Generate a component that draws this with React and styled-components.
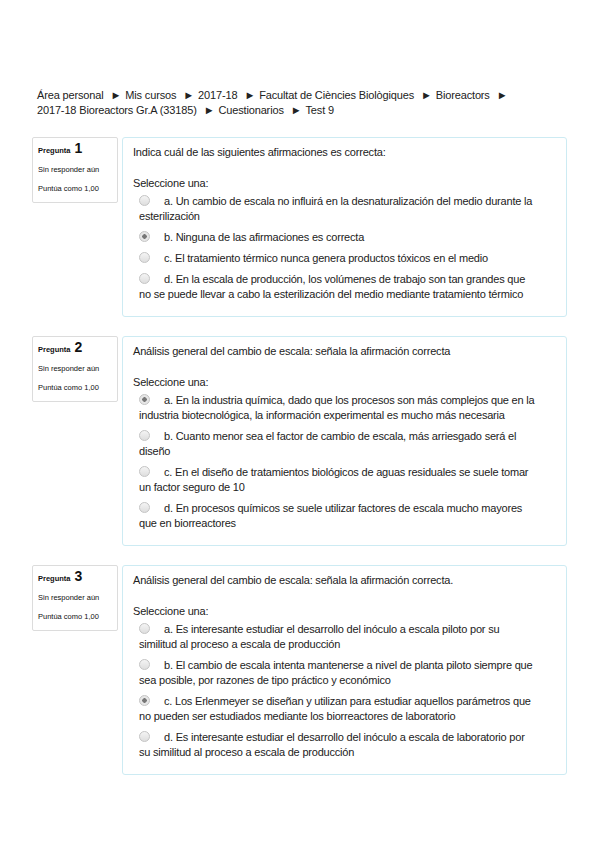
import styled, { createGlobalStyle } from "styled-components";

const GlobalStyle = createGlobalStyle`
  body {
    margin: 0;
    background: #fff;
    font-family: "Liberation Sans", Arial, sans-serif;
    color: #222;
  }
`;

const questions = [
  {
    num: 1,
    text: "Indica cuál de las siguientes afirmaciones es correcta:",
    selected: 1,
    options: [
      "a. Un cambio de escala no influirá en la desnaturalización del medio durante la esterilización",
      "b. Ninguna de las afirmaciones es correcta",
      "c. El tratamiento térmico nunca genera productos tóxicos en el medio",
      "d. En la escala de producción, los volúmenes de trabajo son tan grandes que no se puede llevar a cabo la esterilización del medio mediante tratamiento térmico",
    ],
  },
  {
    num: 2,
    text: "Análisis general del cambio de escala: señala la afirmación correcta",
    selected: 0,
    options: [
      "a. En la industria química, dado que los procesos son más complejos que en la industria biotecnológica, la información experimental es mucho más necesaria",
      "b. Cuanto menor sea el factor de cambio de escala, más arriesgado será el diseño",
      "c. En el diseño de tratamientos biológicos de aguas residuales se suele tomar un factor seguro de 10",
      "d. En procesos químicos se suele utilizar factores de escala mucho mayores que en biorreactores",
    ],
  },
  {
    num: 3,
    text: "Análisis general del cambio de escala: señala la afirmación correcta.",
    selected: 2,
    options: [
      "a. Es interesante estudiar el desarrollo del inóculo a escala piloto por su similitud al proceso a escala de producción",
      "b. El cambio de escala intenta mantenerse a nivel de planta piloto siempre que sea posible, por razones de tipo práctico y económico",
      "c. Los Erlenmeyer se diseñan y utilizan para estudiar aquellos parámetros que no pueden ser estudiados mediante los biorreactores de laboratorio",
      "d. Es interesante estudiar el desarrollo del inóculo a escala de laboratorio por su similitud al proceso a escala de producción",
    ],
  },
];

const crumbs = [
  "Área personal",
  "Mis cursos",
  "2017-18",
  "Facultat de Ciències Biològiques",
  "Bioreactors",
  "2017-18 Bioreactors Gr.A (33185)",
  "Cuestionarios",
  "Test 9",
];

const Page = styled.div`
  padding: 88px 32px 40px 32px;
  width: 535px;
`;

const Breadcrumb = styled.div`
  font-size: 11px;
  line-height: 15px;
  letter-spacing: -0.15px;
  padding-left: 5px;
  margin-bottom: 19px;
  color: #222;
`;

const Arrow = styled.span`
  font-size: 11px;
  margin: 0 4px 0 7px;
`;

const Question = styled.div`
  display: flex;
  align-items: flex-start;
  gap: 4px;
  margin-bottom: 19px;
`;

const Info = styled.div`
  width: 74px;
  flex: none;
  border: 1px solid #dcdcdc;
  border-radius: 2px;
  padding: 3px 5px 8px 5px;
  font-size: 7.5px;
  color: #111;
`;

const InfoTitle = styled.div`
  font-size: 7.5px;
  font-weight: bold;
  line-height: 14px;
  margin-bottom: 7px;
`;

const Num = styled.span`
  font-size: 14px;
  margin-left: 2px;
`;

const InfoLine = styled.div`
  line-height: 10px;
  margin-bottom: 9px;
  &:last-child {
    margin-bottom: 0;
  }
`;

const Content = styled.div`
  flex: 1;
  border: 1px solid #cdebf3;
  border-radius: 3px;
  padding: 7px 29px 11px 10px;
  font-size: 11px;
  line-height: 15px;
  letter-spacing: -0.2px;
`;

const QText = styled.div`
  margin-bottom: 16px;
`;

const Prompt = styled.div`
  margin-bottom: 0;
`;

const Option = styled.div`
  padding: 3px 0 3px 6px;
`;

const Radio = styled.span`
  display: inline-block;
  width: 9px;
  height: 9px;
  border-radius: 50%;
  border: 1px solid #c4c4c4;
  background: ${(p) =>
    p.checked
      ? "radial-gradient(circle, #777 0 2px, #e6e6e6 2.5px)"
      : "linear-gradient(#f4f4f4, #dedede)"};
  vertical-align: -1px;
  margin-right: 14px;
`;

export default function App() {
  return (
    <>
      <GlobalStyle />
      <Page>
        <Breadcrumb>
          {crumbs.map((c, i) => (
            <span key={i}>
              {c}
              {i < crumbs.length - 1 && <Arrow>►</Arrow>}
              {i === 4 && <br />}
            </span>
          ))}
        </Breadcrumb>
        {questions.map((q) => (
          <Question key={q.num}>
            <Info>
              <InfoTitle>
                Pregunta <Num>{q.num}</Num>
              </InfoTitle>
              <InfoLine>Sin responder aún</InfoLine>
              <InfoLine>Puntúa como 1,00</InfoLine>
            </Info>
            <Content>
              <QText>{q.text}</QText>
              <Prompt>Seleccione una:</Prompt>
              {q.options.map((o, i) => (
                <Option key={i}>
                  <Radio checked={i === q.selected} />
                  {o}
                </Option>
              ))}
            </Content>
          </Question>
        ))}
      </Page>
    </>
  );
}
